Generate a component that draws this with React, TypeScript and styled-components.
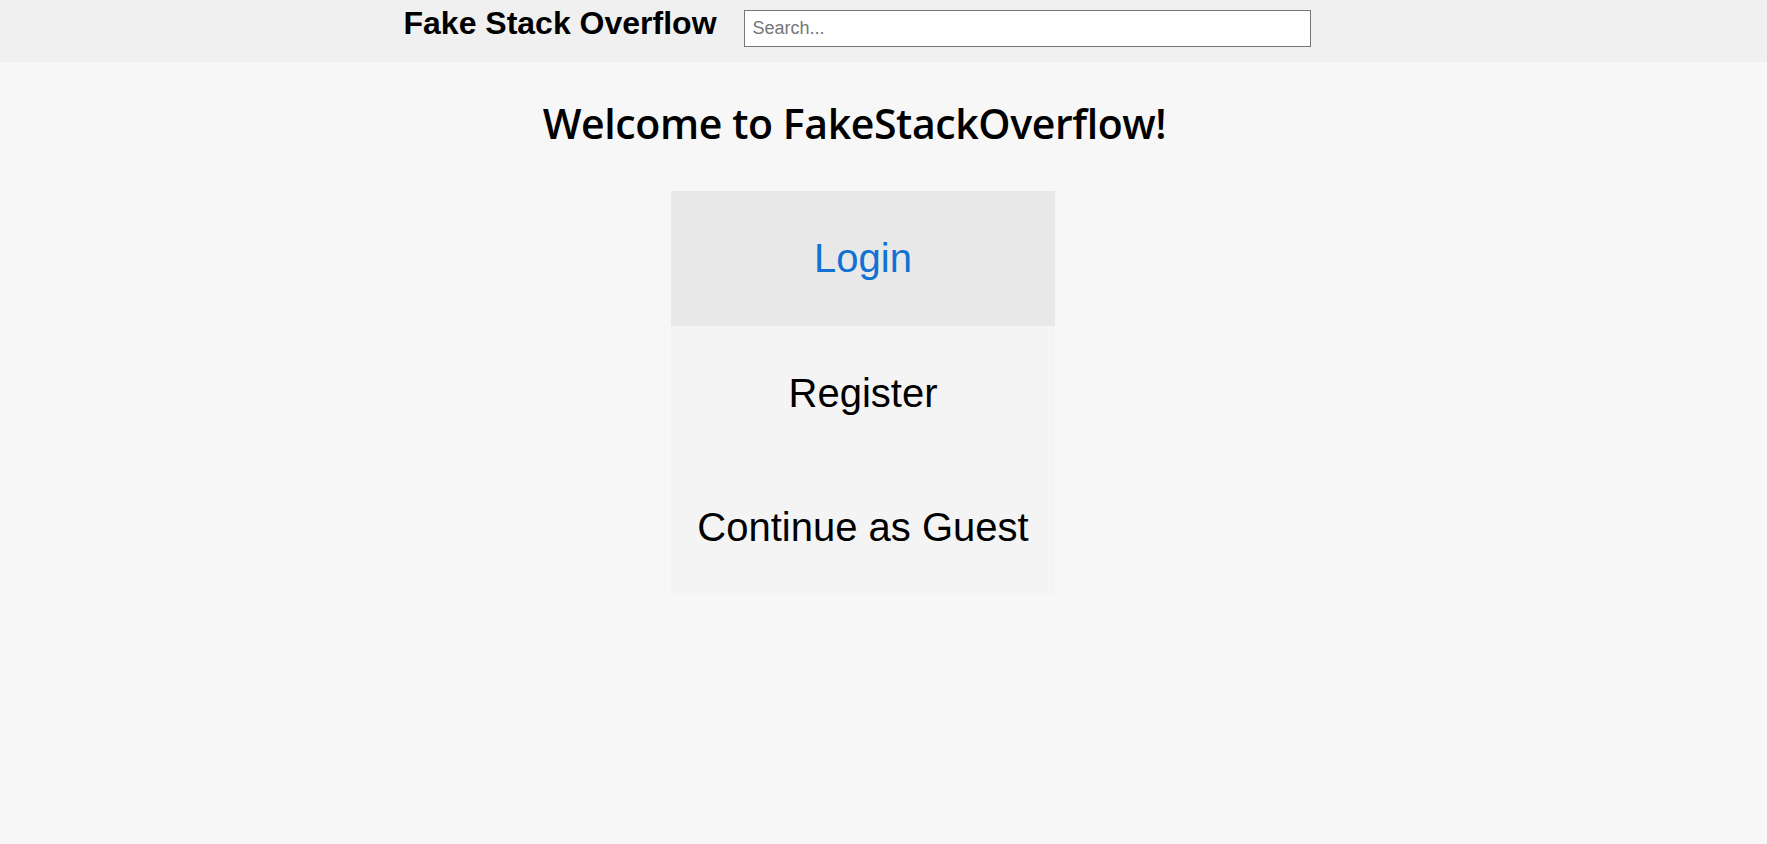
import React from 'react'
import styled, { createGlobalStyle } from 'styled-components'

const GlobalStyle = createGlobalStyle`
  html, body {
    margin: 0;
    padding: 0;
    background: #f7f7f7;
    font-family: "Liberation Sans", Arial, sans-serif;
  }
`

const Page = styled.div`
  min-height: 844px;
  background: #f7f7f7;
`

const Header = styled.header`
  height: 62px;
  background: #f0f0f0;
  display: flex;
  justify-content: center;
  align-items: flex-start;
  gap: 27px;
  padding-right: 53px;
  box-sizing: border-box;
`

const Title = styled.h1`
  margin: 5px 0 0;
  font-size: 32px;
  font-weight: bold;
  color: #000;
  white-space: nowrap;
`

const SearchInput = styled.input`
  margin-top: 10px;
  width: 567px;
  height: 37px;
  box-sizing: border-box;
  border: 1px solid #767676;
  padding: 0 8px;
  font-family: "Liberation Sans", Arial, sans-serif;
  font-size: 18px;
  background: #fff;
  outline: none;

  &::placeholder {
    color: #767676;
  }
`

const Main = styled.main`
  display: flex;
  flex-direction: column;
  align-items: center;
`

const Welcome = styled.h2`
  margin: 0;
  padding: 37px 58px 0 0;
  font-family: "Open Sans", "DejaVu Sans", sans-serif;
  font-weight: 600;
  font-size: 41px;
  letter-spacing: -0.4px;
  line-height: 1.2;
  color: #000;
`

const Menu = styled.nav`
  margin-top: 43px;
  margin-right: 41px;
  width: 384px;
  display: flex;
  flex-direction: column;
  background: #f4f4f4;
`

const MenuItem = styled.button<{ $active?: boolean }>`
  height: 134.7px;
  border: none;
  margin: 0;
  padding: 0;
  background: ${({ $active }) => ($active ? '#e8e8e8' : '#f4f4f4')};
  color: ${({ $active }) => ($active ? '#1172d3' : '#000')};
  font-family: "Liberation Sans", Arial, sans-serif;
  font-size: 40px;
  cursor: pointer;
`

export default function App() {
  return (
    <>
      <GlobalStyle />
      <Page>
        <Header>
          <Title>Fake Stack Overflow</Title>
          <SearchInput placeholder="Search..." />
        </Header>
        <Main>
          <Welcome>Welcome to FakeStackOverflow!</Welcome>
          <Menu>
            <MenuItem $active>Login</MenuItem>
            <MenuItem>Register</MenuItem>
            <MenuItem>Continue as Guest</MenuItem>
          </Menu>
        </Main>
      </Page>
    </>
  )
}
